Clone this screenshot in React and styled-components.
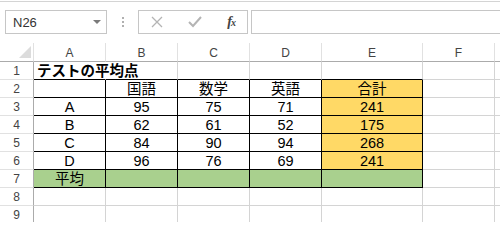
import React from 'react';
import styled, { createGlobalStyle } from 'styled-components';

const Colours = {
    GRID: '#d4d4d4',
    HEADER_LINE: '#ababab',
    HEADER_SEP: '#e1e1e1',
    HEADER_TEXT: '#444444',
    INK: '#000000',
    TOTAL: '#ffd966',
    AVERAGE: '#a9d08e',
    BOX_BORDER: '#c6c6c6',
    ICON: '#b4b4b4',
};

const COLUMNS = ['A', 'B', 'C', 'D', 'E', 'F', 'G'];
const TABLE_COLS = ['A', 'B', 'C', 'D', 'E'];

// sheet contents, keyed by row then column
const sheet = {
    1: { A: 'テストの平均点' },
    2: { B: '国語', C: '数学', D: '英語', E: '合計' },
    3: { A: 'A', B: '95', C: '75', D: '71', E: '241' },
    4: { A: 'B', B: '62', C: '61', D: '52', E: '175' },
    5: { A: 'C', B: '84', C: '90', D: '94', E: '268' },
    6: { A: 'D', B: '96', C: '76', D: '69', E: '241' },
    7: { A: '平均' },
};

const GlobalStyle = createGlobalStyle`
    html, body {
        margin: 0;
        background: #ffffff;
        overflow: hidden;
    }
    body {
        font-family: "Liberation Sans", "Noto Sans CJK JP", sans-serif;
    }
`;

const Window = styled.div`
    width: 500px;
    height: 222px;
    overflow: hidden;
    padding-top: 1px;
    box-sizing: border-box;
`;

const FormulaBar = styled.div`
    display: flex;
    align-items: flex-start;
    height: 42px;
    box-sizing: border-box;
    border-top: 1px solid ${Colours.GRID};
    padding: 8px 0 0 5px;
`;

const NameBox = styled.div`
    display: flex;
    align-items: center;
    justify-content: space-between;
    width: 102px;
    height: 24px;
    box-sizing: border-box;
    border: 1px solid ${Colours.BOX_BORDER};
    padding: 0 5px 0 7px;
    font-family: "Liberation Sans", Arial, sans-serif;
    font-size: 13px;
    color: #333333;
`;

const Caret = styled.span`
    width: 0;
    height: 0;
    border-left: 4px solid transparent;
    border-right: 4px solid transparent;
    border-top: 4px solid #7a7a7a;
`;

const Grip = styled.div`
    display: flex;
    flex-direction: column;
    align-items: center;
    gap: 2px;
    width: 31px;
    padding-top: 7px;

    span {
        width: 2px;
        height: 2px;
        background: #b0b0b0;
    }
`;

const ActionBox = styled.div`
    display: flex;
    align-items: center;
    justify-content: space-between;
    width: 110px;
    height: 24px;
    box-sizing: border-box;
    border: 1px solid ${Colours.BOX_BORDER};
    padding: 0 12px 0 12px;
`;

const FxLabel = styled.span`
    font-family: "Liberation Serif", "DejaVu Serif", serif;
    font-style: italic;
    font-weight: bold;
    font-size: 14px;
    color: #444444;
    letter-spacing: -1px;

    small {
        font-size: 10px;
    }
`;

const FormulaInput = styled.div`
    flex: 1;
    height: 24px;
    margin-left: 3px;
    margin-right: -4px;
    box-sizing: border-box;
    border: 1px solid ${Colours.BOX_BORDER};
`;

const Sheet = styled.div`
    display: grid;
    grid-template-columns: 34px 72px 72px 72px 72px 101px 72px 72px;
    grid-template-rows: 19px;
    grid-auto-rows: 18px;
`;

const Corner = styled.div`
    display: flex;
    align-items: flex-end;
    justify-content: flex-end;
    box-sizing: border-box;
    border-right: 1px solid ${Colours.HEADER_SEP};
    border-bottom: 1px solid ${Colours.HEADER_LINE};
    padding: 0 2px 3px 0;
`;

const ColumnHeader = styled.div`
    display: flex;
    align-items: center;
    justify-content: center;
    box-sizing: border-box;
    border-right: 1px solid ${Colours.HEADER_SEP};
    border-bottom: 1px solid ${Colours.HEADER_LINE};
    font-family: "Liberation Sans", Arial, sans-serif;
    font-size: 12px;
    line-height: 14px;
    color: ${Colours.HEADER_TEXT};
    padding-top: 1px;
`;

const RowHeader = styled.div`
    display: flex;
    align-items: center;
    justify-content: center;
    box-sizing: border-box;
    border-right: 1px solid ${Colours.HEADER_LINE};
    border-bottom: 1px solid ${Colours.HEADER_SEP};
    font-family: "Liberation Sans", Arial, sans-serif;
    font-size: 12px;
    line-height: 14px;
    color: ${Colours.HEADER_TEXT};
    padding-top: 1px;
`;

const Cell = styled.div`
    display: flex;
    align-items: flex-end;
    justify-content: ${({ $align }) => ($align === 'left' ? 'flex-start' : 'center')};
    box-sizing: border-box;
    min-width: 0;
    padding: 0 3px;
    background: ${({ $fill }) => $fill || 'transparent'};
    border-right: 1px solid ${({ $right }) => $right};
    border-bottom: 1px solid ${({ $bottom }) => $bottom};
    font-size: 14.5px;
    line-height: 16px;
    font-weight: ${({ $bold }) => ($bold ? 'bold' : 'normal')};
    color: ${Colours.INK};
    white-space: nowrap;
    overflow: visible;
`;

const CrossIcon = () => (
    <svg width="12" height="12" viewBox="0 0 12 12">
        <path d="M1 1 L11 11 M11 1 L1 11" stroke={Colours.ICON} strokeWidth="1.3" fill="none" />
    </svg>
);

const CheckIcon = () => (
    <svg width="14" height="12" viewBox="0 0 14 12">
        <path d="M1 6 L5 10 L13 1" stroke={Colours.ICON} strokeWidth="2" fill="none" />
    </svg>
);

const CornerMark = () => (
    <svg width="12" height="12" viewBox="0 0 12 12">
        <polygon points="12,0 12,12 0,12" fill="#dcdcdc" />
    </svg>
);

const cellStyle = (row, col) => {
    const inTable = TABLE_COLS.includes(col);
    const bottom = inTable && row >= 1 && row <= 7 ? Colours.INK : Colours.GRID;
    let right = Colours.GRID;
    if (inTable && row >= 2 && row <= 7) right = Colours.INK;
    if (row === 1 && col === 'A') right = 'transparent';

    let fill;
    if (col === 'E' && row >= 2 && row <= 6) fill = Colours.TOTAL;
    if (inTable && row === 7) fill = Colours.AVERAGE;

    return { bottom, right, fill };
};

const App = () => {
    const rows = [1, 2, 3, 4, 5, 6, 7, 8, 9];

    return (
        <Window>
            <GlobalStyle />
            <FormulaBar>
                <NameBox>
                    N26
                    <Caret />
                </NameBox>
                <Grip>
                    <span />
                    <span />
                    <span />
                </Grip>
                <ActionBox>
                    <CrossIcon />
                    <CheckIcon />
                    <FxLabel>f<small>x</small></FxLabel>
                </ActionBox>
                <FormulaInput />
            </FormulaBar>
            <Sheet>
                <Corner>
                    <CornerMark />
                </Corner>
                {COLUMNS.map((col) => (
                    <ColumnHeader key={col}>{col === 'G' ? '' : col}</ColumnHeader>
                ))}
                {rows.map((row) => (
                    <React.Fragment key={row}>
                        <RowHeader>{row}</RowHeader>
                        {COLUMNS.map((col) => {
                            const { bottom, right, fill } = cellStyle(row, col);
                            const isTitle = row === 1 && col === 'A';
                            return (
                                <Cell
                                    key={col}
                                    $bottom={bottom}
                                    $right={right}
                                    $fill={fill}
                                    $bold={isTitle}
                                    $align={isTitle ? 'left' : 'center'}
                                >
                                    {sheet[row]?.[col]}
                                </Cell>
                            );
                        })}
                    </React.Fragment>
                ))}
            </Sheet>
        </Window>
    );
};

export default App;
